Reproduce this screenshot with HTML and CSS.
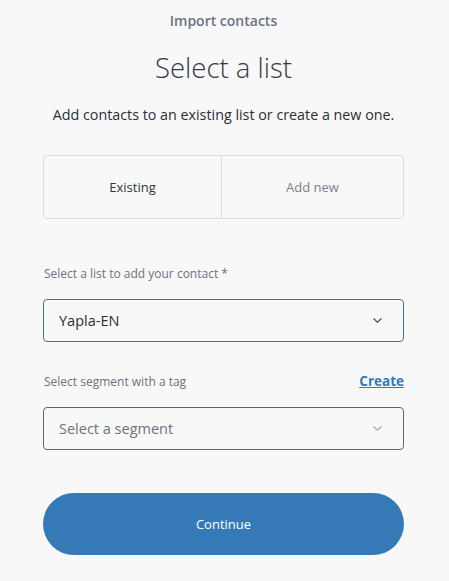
FILE: index.html
```html
<!DOCTYPE html>
<html>
<head>
<meta charset="utf-8">
<link rel="stylesheet" href="styles.css">
</head>
<body>
<div class="page">
  <div class="eyebrow">Import contacts</div>
  <h1 class="title">Select a list</h1>
  <p class="subtitle">Add contacts to an existing list or create a new one.</p>
  <div class="tabs">
    <div class="tab tab-active">Existing</div>
    <div class="tab">Add new</div>
  </div>
  <div class="field field-first">
    <div class="label-row"><span class="label">Select a list to add your contact *</span></div>
    <div class="select select-focus">
      <span class="value">Yapla-EN</span>
      <svg class="chev" width="9" height="5" viewBox="0 0 9 5"><path d="M0.5 0.5 L4.5 4.2 L8.5 0.5" fill="none" stroke="#4b5260" stroke-width="1.3"/></svg>
    </div>
  </div>
  <div class="field">
    <div class="label-row"><span class="label">Select segment with a tag</span><a class="create" href="#">Create</a></div>
    <div class="select">
      <span class="value placeholder">Select a segment</span>
      <svg class="chev" width="9" height="5" viewBox="0 0 9 5"><path d="M0.5 0.5 L4.5 4.2 L8.5 0.5" fill="none" stroke="#a3a8b0" stroke-width="1.2"/></svg>
    </div>
  </div>
  <button class="continue">Continue</button>
</div>
</body>
</html>
```
FILE: styles.css
```css
html, body { margin: 0; padding: 0; }
body {
  background: #f8f8f8;
  font-family: "Open Sans", Lato, sans-serif;
  color: #2f3540;
}
.page {
  padding: 12px 45px 0 43px;
  display: flex;
  flex-direction: column;
}
.eyebrow {
  text-align: center;
  font-size: 14px;
  font-weight: 600;
  color: #6b7280;
  line-height: 18px;
}
.title {
  margin: 19px 0 0;
  text-align: center;
  font-size: 27.5px;
  font-weight: 300;
  line-height: 38px;
  color: #343b47;
}
.subtitle {
  margin: 18px 0 0;
  text-align: center;
  font-size: 14.3px;
  line-height: 20px;
  color: #2b2f36;
}
.tabs {
  margin-top: 30px;
  height: 62px;
  border: 1px solid #dcdcdc;
  border-radius: 4px;
  display: flex;
}
.tab {
  flex: 0 0 177px;
  display: flex;
  align-items: center;
  justify-content: center;
  font-size: 13px;
  color: #7b8089;
}
.tab + .tab {
  flex: 1;
  border-left: 1px solid #dcdcdc;
}
.tab-active { color: #2f3540; }
.field { display: flex; flex-direction: column; }
.field-first { margin-top: 46px; }
.field + .field { margin-top: 30px; }
.label-row {
  display: flex;
  justify-content: space-between;
  align-items: baseline;
  height: 18px;
  padding-left: 1px;
}
.label {
  font-size: 12px;
  color: #6b7280;
}
.create {
  font-size: 13.5px;
  font-weight: 700;
  color: #3579b8;
  text-decoration: underline;
}
.select {
  margin-top: 16px;
  height: 41px;
  border: 1px solid #5f6672;
  border-radius: 4px;
  display: flex;
  align-items: center;
  justify-content: space-between;
  padding: 0 21px 0 15px;
}
.select-focus { border-color: #3a72ae; }
.field + .field .select { margin-top: 17px; }
.value { font-size: 14.5px; color: #2b2f36; }
.placeholder { color: #6b7280; }
.chev { display: block; }
.continue {
  margin-top: 43px;
  height: 62px;
  border: none;
  border-radius: 31px;
  background: #357ab7;
  color: #ffffff;
  font-family: inherit;
  font-size: 13px;
}
```
